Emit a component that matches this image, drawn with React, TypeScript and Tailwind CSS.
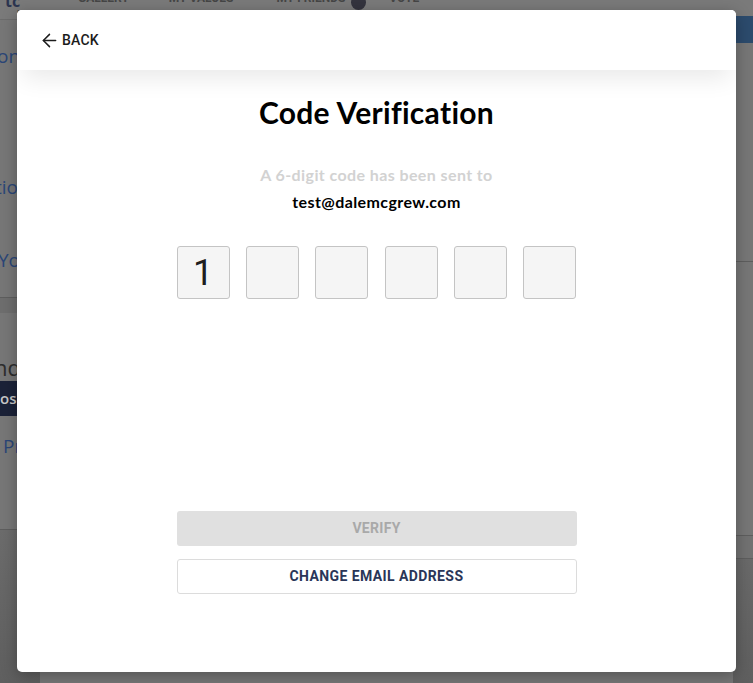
import { ArrowLeft } from 'lucide-react';

const boxes = ['1', '', '', '', '', ''];

export default function App() {
  return (
    <div className="relative h-[683px] w-[753px] overflow-hidden bg-[#777777] font-['Roboto',sans-serif]">
      {/* Dimmed page behind the dialog */}
      <div className="flex h-full flex-col">
        <div className="flex h-[20px] items-end border-b border-[#6c6c6c] bg-[#7a7a7a] text-[12px] font-bold leading-none text-[#454545]">
          <div className="mb-[1px] ml-[5px] flex w-[40px] flex-col font-['Open_Sans',sans-serif] leading-none">
            <span className="-mt-[6px] text-[16px] font-bold text-[#2c3550]">tc</span>
            <span className="ml-[12px] text-[9px] font-normal text-[#333]">beta</span>
          </div>
          <span className="mb-[15px] ml-[33px]">GALLERY</span>
          <span className="mb-[15px] ml-[40px]">MY VALUES</span>
          <span className="mb-[15px] ml-[43px]">MY FRIENDS</span>
          <span className="mb-[9px] ml-[6px] h-[15px] w-[15px] rounded-full bg-[#34343e]" />
          <span className="mb-[15px] ml-[23px]">VOTE</span>
        </div>
        <div className="flex flex-1">
          <div className="flex w-[40px] flex-col font-['Open_Sans',sans-serif] text-[19px] text-[#2b4677]">
            <div className="-ml-[3px] mt-[24px] leading-[24px]">on</div>
            <div className="-ml-[5px] mt-[107px] leading-[24px]">tion</div>
            <div className="-ml-[2px] mt-[49px] leading-[24px]">You</div>
            <div className="mt-[25px] h-[1px] bg-[#5e5e5e]" />
            <div className="h-[15px] bg-[#6e6e6e]" />
            <div className="-ml-[6px] mt-[41px] text-[22px] leading-[26px] text-[#2d2d2d]">nd</div>
            <div className="mt-[1px] flex h-[35px] items-center bg-[#1b2238] text-[15px] font-semibold text-[#c8c8c8]">os</div>
            <div className="ml-[3px] mt-[18px] leading-[24px]">Pr</div>
            <div className="mt-[71px] h-[1px] bg-[#5e5e5e]" />
            <div className="flex-1 bg-gradient-to-b from-[#6c6c6c] to-[#5f5f5f]" />
          </div>
          <div className="flex-1" />
          <div className="flex w-[20px] flex-col">
            <div className="mt-[-4px] h-[27px] bg-[#2c4b6d]" />
            <div className="mt-[218px] h-[1px] bg-[#5e5e5e]" />
            <div className="mt-[273px] h-[1px] bg-[#5e5e5e]" />
            <div className="h-[22px] bg-[#727272]" />
            <div className="h-[1px] bg-[#5e5e5e]" />
            <div className="flex-1 bg-gradient-to-b from-[#6a6a6a] to-[#5f5f5f]" />
          </div>
        </div>
      </div>

      {/* Dialog */}
      <div className="absolute left-[17px] top-[10px] flex h-[662px] w-[719px] flex-col overflow-hidden rounded-[5px] bg-white shadow-[0_4px_16px_rgba(0,0,0,0.3)]">
        <div className="relative z-10 flex h-[60px] items-center bg-white pl-[22px] shadow-[0_14px_24px_-6px_rgba(0,0,0,0.09)]">
          <button className="flex items-center gap-[2px] text-[14px] font-medium tracking-[0.2px] text-[#1c1c1c]">
            <ArrowLeft className="h-[21px] w-[21px]" strokeWidth={1.7} />
            BACK
          </button>
        </div>

        <div className="flex flex-1 flex-col items-center">
          <h1 className="mt-[23px] font-['Lato',sans-serif] text-[30px] font-bold leading-[38px] tracking-[0.3px] text-black">
            Code Verification
          </h1>
          <p className="mt-[34px] font-['Lato',sans-serif] text-[16px] font-bold leading-[20px] tracking-[0.4px] text-[#d2d2d2]">
            A 6-digit code has been sent to
          </p>
          <p className="mt-[7px] font-['Lato',sans-serif] text-[16px] font-bold leading-[20px] tracking-[0.4px] text-black">
            test@dalemcgrew.com
          </p>

          <div className="mt-[34px] flex gap-[16.4px]">
            {boxes.map((d, i) => (
              <div
                key={i}
                className="flex h-[53px] w-[53px] items-center justify-center rounded-[3px] border border-[#c4c4c4] bg-[#f5f5f5] text-[36px] leading-none text-[#1e1e1e]"
              >
                {d}
              </div>
            ))}
          </div>

          <div className="mt-[212px] flex w-[400px] flex-col gap-[13px]">
            <button className="h-[35px] rounded-[3px] bg-[#e0e0e0] text-[14px] font-bold tracking-[0.3px] text-[#a9a9a9]">
              VERIFY
            </button>
            <button className="h-[35px] rounded-[3px] border border-[#dcdcdc] bg-white text-[14px] font-bold tracking-[0.4px] text-[#2a3658]">
              CHANGE EMAIL ADDRESS
            </button>
          </div>
        </div>
      </div>
    </div>
  );
}
